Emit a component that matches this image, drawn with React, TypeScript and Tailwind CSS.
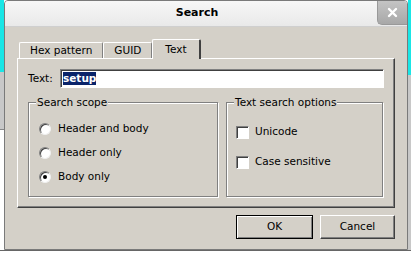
import React, { useState } from 'react';

// Classic 3D-style dialog: "Search" with Text tab selected

const font = "font-['DejaVu_Sans',sans-serif]";

function Radio({ checked, label }: { checked?: boolean; label: string }) {
    return (
        <div className="flex items-center h-[24px]">
            <span className="relative w-[12px] h-[12px] rounded-full bg-white border border-t-[#808080] border-l-[#808080] border-r-[#f0f0f0] border-b-[#f0f0f0] shadow-[inset_1px_1px_0_#404040] flex items-center justify-center">
                {checked && <span className="w-[4px] h-[4px] rounded-full bg-black" />}
            </span>
            <span className="ml-[7px]">{label}</span>
        </div>
    );
}

function Check({ label }: { label: string }) {
    return (
        <div className="flex items-center h-[30px]">
            <span className="w-[13px] h-[13px] bg-white border border-t-[#808080] border-l-[#808080] border-r-white border-b-white shadow-[inset_1px_1px_0_#404040]" />
            <span className="ml-[6px]">{label}</span>
        </div>
    );
}

function GroupBox({ title, className, children }: { title: string; className?: string; children: React.ReactNode }) {
    return (
        <div className={`relative border border-[#808080] shadow-[1px_1px_0_#fff,inset_1px_1px_0_#fff] ${className ?? ''}`}>
            <span className="absolute -top-[8px] left-[7px] bg-[#d4d0c8] px-[1px] leading-[14px]">{title}</span>
            {children}
        </div>
    );
}

export default function App() {
    const [tab] = useState('Text');
    const tabs = ['Hex pattern', 'GUID', 'Text'];

    return (
        <div className={`${font} text-[10.5px] text-black w-[411px] h-[254px] overflow-hidden bg-white flex flex-col`}>
            <div className="flex h-[250px]">
                {/* desktop behind, left */}
                <div className="w-[4px] flex flex-col">
                    <div className="h-[72px] bg-[#19e6e6]" />
                    <div className="h-[58px] bg-[#c8c8c8] border-b border-[#888]" />
                    <div className="flex-1 bg-white" />
                </div>

                {/* window */}
                <div className="w-[404px] flex flex-col border border-[#7a7a7a] rounded-t-[4px] overflow-hidden bg-[#d4d0c8]">
                    <div className="h-[26px] relative flex items-center justify-center pr-[18px] bg-gradient-to-b from-[#f7f7f7] to-[#e9e9e9] border-b border-[#cfcfcf]">
                        <span className="font-bold text-[11px]">Search</span>
                        <div className="absolute right-0 top-0 w-[30px] h-[24px] rounded-bl-[5px] bg-gradient-to-b from-[#c4c4c4] to-[#a8a8a8] border-l border-b border-[#999] flex items-center justify-center">
                            <svg width="11" height="11" viewBox="0 0 11 11">
                                <path d="M2 2 L9 9 M9 2 L2 9" stroke="#fff" strokeWidth="2.4" strokeLinecap="round" />
                            </svg>
                        </div>
                    </div>

                    <div className="flex-1 flex flex-col pl-[12px] pr-[12px] pt-[11px]">
                        {/* tabs */}
                        <div className="flex items-end h-[20px] pl-[2px]">
                            {tabs.map(t => (
                                <div
                                    key={t}
                                    className={
                                        t === tab
                                            ? 'h-[20px] -mb-[1px] z-10 relative px-[12px] flex items-center bg-[#d4d0c8] border-t border-l border-white border-r-2 border-r-[#404040] rounded-t-[2px]'
                                            : 'h-[16px] px-[10px] flex items-center border-t border-l border-white border-r border-r-[#808080] rounded-t-[2px]'
                                    }
                                >
                                    {t}
                                </div>
                            ))}
                        </div>

                        {/* pane */}
                        <div className="h-[150px] w-[378px] border-t border-l border-white border-r border-b border-r-[#404040] border-b-[#404040] shadow-[inset_-1px_-1px_0_#808080] px-[10px] pt-[10px]">
                            <div className="flex items-center h-[19px]">
                                <span className="w-[32px]">Text:</span>
                                <div className="flex-1 h-[19px] bg-white border-t border-l border-[#808080] border-r border-b border-r-white border-b-white shadow-[inset_1px_1px_0_#404040] flex items-center pl-[2px]">
                                    <span className="bg-[#0a246a] text-white font-bold leading-[13px]">setup</span>
                                </div>
                            </div>

                            <div className="flex gap-[8px] mt-[14px]">
                                <GroupBox title="Search scope" className="w-[190px] h-[95px] pl-[10px] pt-[14px]">
                                    <Radio label="Header and body" />
                                    <Radio label="Header only" />
                                    <Radio checked label="Body only" />
                                </GroupBox>
                                <GroupBox title="Text search options" className="w-[157px] h-[95px] pl-[9px] pt-[14px]">
                                    <Check label="Unicode" />
                                    <Check label="Case sensitive" />
                                </GroupBox>
                            </div>
                        </div>

                        {/* buttons */}
                        <div className="flex justify-end gap-[7px] mt-[7px] pr-[0px]">
                            <button className="w-[77px] h-[24px] bg-[#d4d0c8] border border-[#000] shadow-[inset_1px_1px_0_#fff,inset_-1px_-1px_0_#808080]">
                                OK
                            </button>
                            <button className="w-[75px] h-[24px] bg-[#d4d0c8] border-t border-l border-white border-r border-b border-r-[#404040] border-b-[#404040] shadow-[inset_-1px_-1px_0_#808080]">
                                Cancel
                            </button>
                        </div>
                    </div>
                </div>

                {/* desktop behind, right */}
                <div className="w-[3px] flex flex-col">
                    <div className="h-[75px] bg-[#19e6e6]" />
                    <div className="flex-1 bg-[#c8c8c8]" />
                </div>
            </div>
            <div className="h-[4px] bg-white border-t border-[#666]" />
        </div>
    );
}
